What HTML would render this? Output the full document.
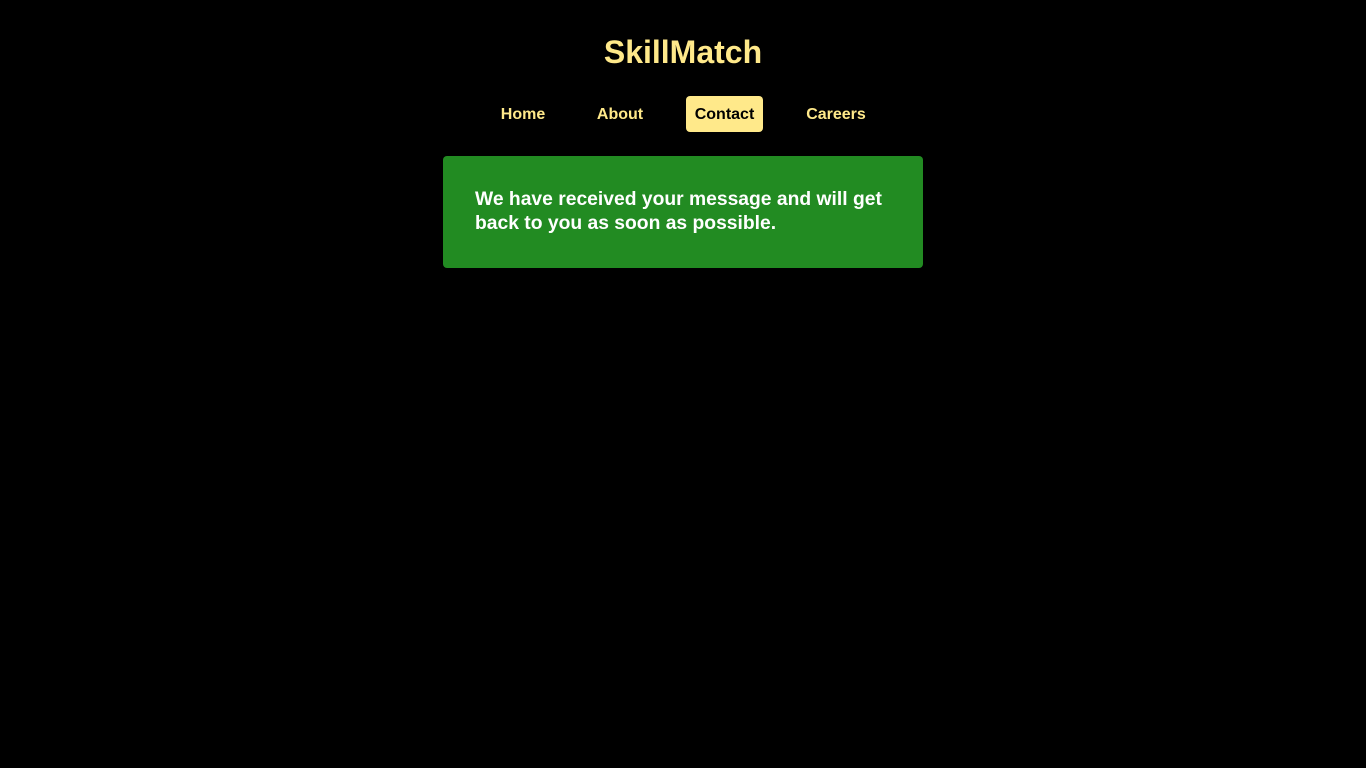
<!DOCTYPE html>
<html><head><style>
body{margin:0;background:#000;width:1366px;height:768px;font-family:"Liberation Sans",sans-serif;font-weight:bold;position:relative;overflow:hidden}
.t{position:absolute;top:30px;left:0;width:1366px;text-align:center;color:#ffe98a;font-size:32px;line-height:44px}
.n{position:absolute;top:96px;height:36px;line-height:38px;font-size:16px;color:#ffe98a;text-align:center;border-radius:4px}
.a{background:#ffe98a;color:#000;line-height:36px}
.a span{position:relative;top:1px}
.g{position:absolute;left:443px;top:156px;width:416px;height:112px;padding:0 32px;background:#228b22;border-radius:4px;color:#fff;font-size:19.3px;line-height:24px}
.g p{margin:32px 0 0}
</style></head><body>
<div class="t">SkillMatch</div>
<div class="n" style="left:492px;width:62px">Home</div>
<div class="n" style="left:589px;width:62px">About</div>
<div class="n a" style="left:686px;width:77px"><span>Contact</span></div>
<div class="n" style="left:798px;width:76px">Careers</div>
<div class="g"><p>We have received your message and will get back to you as soon as possible.</p></div>
</body></html>
